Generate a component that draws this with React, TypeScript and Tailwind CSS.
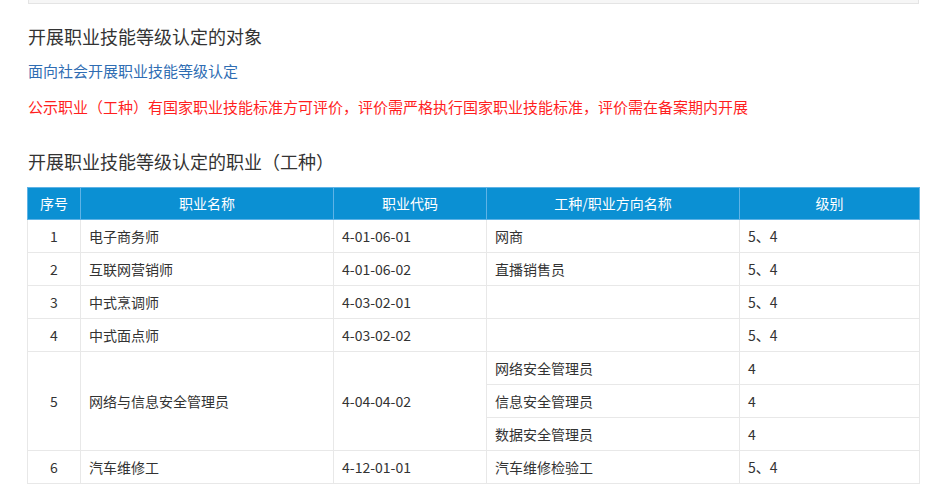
const rows: { no: string; name: string; code: string; subs: { dir: string; level: string }[] }[] = [
  { no: "1", name: "电子商务师", code: "4-01-06-01", subs: [{ dir: "网商", level: "5、4" }] },
  { no: "2", name: "互联网营销师", code: "4-01-06-02", subs: [{ dir: "直播销售员", level: "5、4" }] },
  { no: "3", name: "中式烹调师", code: "4-03-02-01", subs: [{ dir: "", level: "5、4" }] },
  { no: "4", name: "中式面点师", code: "4-03-02-02", subs: [{ dir: "", level: "5、4" }] },
  {
    no: "5",
    name: "网络与信息安全管理员",
    code: "4-04-04-02",
    subs: [
      { dir: "网络安全管理员", level: "4" },
      { dir: "信息安全管理员", level: "4" },
      { dir: "数据安全管理员", level: "4" },
    ],
  },
  { no: "6", name: "汽车维修工", code: "4-12-01-01", subs: [{ dir: "汽车维修检验工", level: "5、4" }] },
];

const td = "border border-[#e8e8e8] px-2 text-[14px] text-[#333]";
const th = "border border-[#5fb3e6] font-normal text-[14px] text-white text-center";

export default function App() {
  return (
    <div
      className="min-h-screen bg-white px-[27px]"
      style={{ fontFamily: '"Noto Sans CJK SC", "Noto Sans", sans-serif' }}
    >
      {/* tail of the box above */}
      <div className="mx-px h-[4px] border-x border-b border-[#e4e4e4] bg-[#f6f6f6]" />

      <h2 className="mt-[20px] pl-px text-[18px] leading-[24px] text-[#333]">
        开展职业技能等级认定的对象
      </h2>
      <p className="mt-[13px] pl-px text-[15px] leading-[20px] text-[#2f6db3]">
        面向社会开展职业技能等级认定
      </p>
      <p className="mt-[16px] pl-px text-[15px] leading-[20px] text-[#ff1f1f]">
        公示职业（工种）有国家职业技能标准方可评价，评价需严格执行国家职业技能标准，评价需在备案期内开展
      </p>

      <h2 className="mt-[32px] pl-px text-[18px] leading-[24px] text-[#333]">
        开展职业技能等级认定的职业（工种）
      </h2>

      <table className="mt-[14px] w-[892px] table-fixed border-collapse">
        <colgroup>
          <col className="w-[53px]" />
          <col className="w-[253px]" />
          <col className="w-[153px]" />
          <col className="w-[253px]" />
          <col className="w-[180px]" />
        </colgroup>
        <thead>
          <tr className="h-[32px] bg-[#0b90d3]">
            <th className={th}>序号</th>
            <th className={th}>职业名称</th>
            <th className={th}>职业代码</th>
            <th className={th}>工种/职业方向名称</th>
            <th className={th}>级别</th>
          </tr>
        </thead>
        <tbody>
          {rows.map((r) =>
            r.subs.map((s, i) => (
              <tr key={r.no + "-" + i} className="h-[33px]">
                {i === 0 && (
                  <>
                    <td rowSpan={r.subs.length} className={`${td} text-center`}>
                      {r.no}
                    </td>
                    <td rowSpan={r.subs.length} className={td}>
                      {r.name}
                    </td>
                    <td rowSpan={r.subs.length} className={td}>
                      {r.code}
                    </td>
                  </>
                )}
                <td className={td}>{s.dir}</td>
                <td className={td}>{s.level}</td>
              </tr>
            ))
          )}
        </tbody>
      </table>
    </div>
  );
}
